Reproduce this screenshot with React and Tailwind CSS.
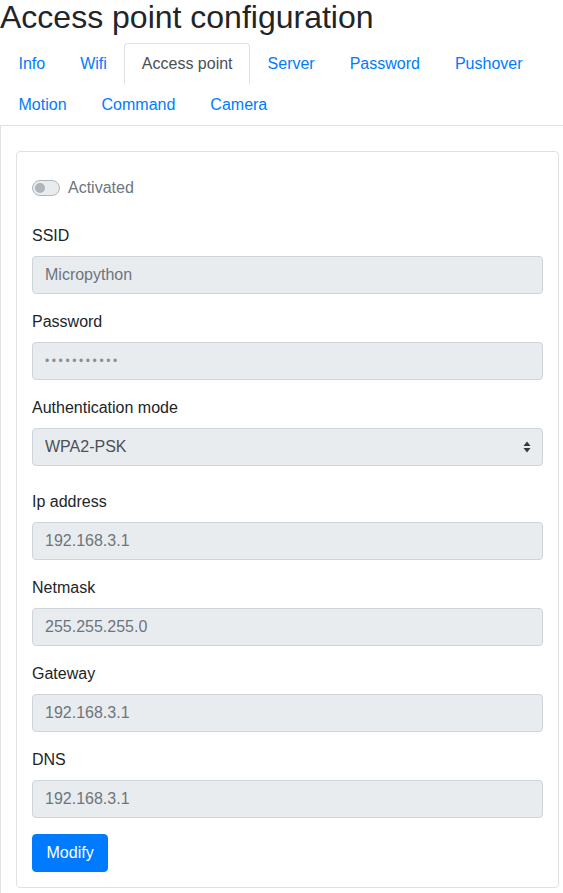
import { useState } from "react";

const tabs = [
    ["Info", "Wifi", "Access point", "Server", "Password", "Pushover"],
    ["Motion", "Command", "Camera"],
];

const fields = [
    { label: "SSID", value: "Micropython" },
    { label: "Password", value: "•••••••••••", password: true },
    { label: "Authentication mode", select: true },
    { label: "Ip address", value: "192.168.3.1" },
    { label: "Netmask", value: "255.255.255.0" },
    { label: "Gateway", value: "192.168.3.1" },
    { label: "DNS", value: "192.168.3.1" },
];

function Field({ field }) {
    if (field.select) {
        return (
            <div className="mb-[24px]">
                <label className="block leading-6 mb-2">{field.label}</label>
                <div className="relative">
                    <select
                        disabled
                        value="WPA2-PSK"
                        onChange={() => {}}
                        className="appearance-none w-full h-[38px] pl-3 pr-8 bg-[#e9ecef] border border-[#ced4da] rounded-[4px] text-[#495057] text-base opacity-100 outline-none"
                    >
                        <option>WPA2-PSK</option>
                    </select>
                    {/* select arrows */}
                    <svg className="absolute right-[12px] top-[13px] pointer-events-none" width="8" height="12" viewBox="0 0 8 12">
                        <path d="M4 0.5 L7.5 5 L0.5 5 Z" fill="#343a40" />
                        <path d="M4 11.5 L7.5 7 L0.5 7 Z" fill="#343a40" />
                    </svg>
                </div>
            </div>
        );
    }
    return (
        <div className="mb-4">
            <label className="block leading-6 mb-2">{field.label}</label>
            <input
                readOnly
                value={field.value}
                className={
                    field.password
                        ? "block w-full h-[38px] px-3 bg-[#e9ecef] border border-[#ced4da] rounded-[4px] text-[#868e96] text-[12px] tracking-[2.6px] outline-none"
                        : "block w-full h-[38px] px-3 bg-[#e9ecef] border border-[#ced4da] rounded-[4px] text-[#6c757d] text-base outline-none"
                }
            />
        </div>
    );
}

export default function App() {
    const [active, setActive] = useState("Access point");

    return (
        <div className="w-[563px] min-h-[893px] bg-white text-[#212529] font-['Liberation_Sans',Arial,sans-serif] text-base">
            <h2 className="text-[32px] leading-[35px] font-medium mb-2">Access point configuration</h2>

            {/* Tabs */}
            <div className="border-b border-[#dee2e6] pl-[1px]">
                {tabs.map((row, i) => (
                    <div key={i} className="flex">
                        {row.map((t) => (
                            <button
                                key={t}
                                onClick={() => setActive(t)}
                                className={
                                    t === active
                                        ? "-mb-px h-[42px] px-[16.5px] leading-6 border border-[#dee2e6] border-b-white bg-white rounded-t-[4px] text-[#495057]"
                                        : "-mb-px h-[42px] px-[16.5px] leading-6 border border-transparent text-[#007bff]"
                                }
                            >
                                {t}
                            </button>
                        ))}
                    </div>
                ))}
            </div>

            {/* Content */}
            <div className="border-l border-[#dee2e6] pt-[25px] pl-[15px] pr-[4px] pb-[6px]">
                <div className="border border-[#dee2e6] rounded-[4px] p-[15px]">
                    <div className="flex items-center h-6 mt-[9px] mb-6">
                        <div className="w-[28px] h-[16px] rounded-full border border-[#adb5bd] bg-[#e9ecef] flex items-center px-[2px]">
                            <div className="w-[10px] h-[10px] rounded-full bg-[#adb5bd]" />
                        </div>
                        <span className="ml-2 text-[#6c757d]">Activated</span>
                    </div>

                    {fields.map((f) => (
                        <Field key={f.label} field={f} />
                    ))}

                    <button className="h-[38px] px-[13.5px] bg-[#007bff] border border-[#007bff] rounded-[4px] text-white">
                        Modify
                    </button>
                </div>
            </div>
        </div>
    );
}
